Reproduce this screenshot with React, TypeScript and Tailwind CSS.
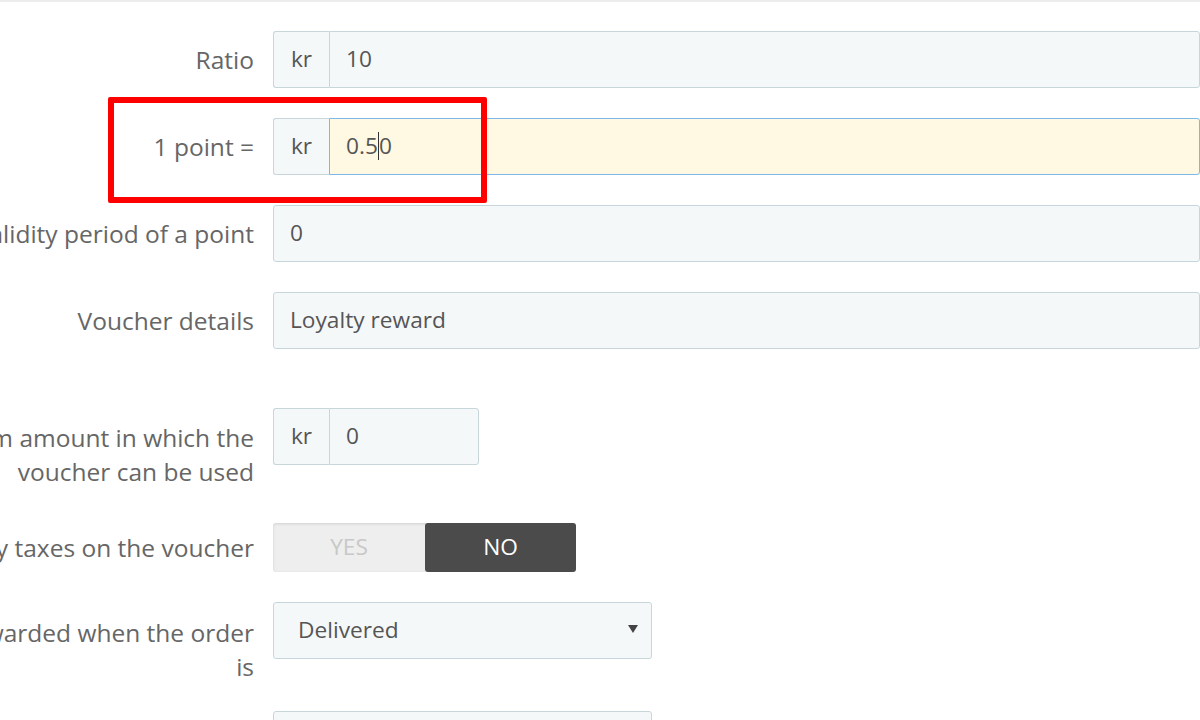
import React from "react";

const labelBase =
  "w-[254px] shrink-0 flex justify-end text-right text-[24.5px] leading-[34px] text-[#666666] whitespace-nowrap";

const fieldBase =
  "h-[57px] flex items-center border border-[#c7d6db] bg-[#f5f8f9] rounded-[3px] text-[22.7px] text-[#555555]";

function Label({ lines, className = "" }: { lines: string[]; className?: string }) {
  return (
    <div className={`${labelBase} ${className}`}>
      <div className="flex flex-col items-end">
        {lines.map((l) => (
          <span key={l}>{l}</span>
        ))}
      </div>
    </div>
  );
}

function AddonInput({
  value,
  width,
  focused = false,
}: {
  value: React.ReactNode;
  width: string;
  focused?: boolean;
}) {
  return (
    <div className={`${width} h-[57px] flex text-[22.7px] text-[#555555]`}>
      <div className="w-[56px] shrink-0 flex items-center justify-center border border-r-0 border-[#c7d6db] bg-[#f5f8f9] rounded-l-[3px]">
        kr
      </div>
      <div
        className={
          focused
            ? "flex-1 flex items-center pl-[16px] border border-[#7cb9e8] bg-[#fff9e3] rounded-r-[3px]"
            : "flex-1 flex items-center pl-[16px] border border-[#c7d6db] bg-[#f5f8f9] rounded-r-[3px]"
        }
      >
        {value}
      </div>
    </div>
  );
}

export default function App() {
  return (
    <div
      className="relative w-[1200px] h-[720px] overflow-hidden bg-white"
      style={{ fontFamily: '"Open Sans", "Noto Sans", sans-serif' }}
    >
      <div className="h-[2px] bg-[#ececec]" />

      <div className="flex flex-col">
        {/* Ratio */}
        <div className="mt-[29px] flex items-center gap-[19px]">
          <Label lines={["Ratio"]} />
          <AddonInput value="10" width="w-[1000px]" />
        </div>

        {/* 1 point = */}
        <div className="mt-[30px] flex items-center gap-[19px]">
          <Label lines={["1 point ="]} />
          <AddonInput
            width="w-[1000px]"
            focused
            value={
              <span className="flex items-center">
                0.5
                <span className="inline-block w-[1px] h-[28px] bg-[#333333]" />
                0
              </span>
            }
          />
        </div>

        {/* Validity */}
        <div className="mt-[30px] flex items-center gap-[19px]">
          <Label lines={["Validity period of a point"]} />
          <div className={`${fieldBase} w-[1000px] pl-[16px]`}>0</div>
        </div>

        {/* Voucher details */}
        <div className="mt-[30px] flex items-center gap-[19px]">
          <Label lines={["Voucher details"]} />
          <div className={`${fieldBase} w-[1000px] pl-[16px]`}>Loyalty reward</div>
        </div>

        {/* Minimum amount */}
        <div className="mt-[59px] flex items-start gap-[19px]">
          <Label
            lines={["Minimum amount in which the", "voucher can be used"]}
            className="pt-[13px]"
          />
          <AddonInput value="0" width="w-[206px]" />
        </div>

        {/* Apply taxes */}
        <div className="mt-[34px] flex items-center gap-[19px]">
          <Label lines={["Apply taxes on the voucher"]} />
          <div className="w-[303px] h-[49px] flex rounded-[3px] bg-[#eeeeee] shadow-[inset_0_1px_3px_rgba(0,0,0,0.12)] text-[22.7px] uppercase">
            <div className="w-[152px] flex items-center justify-center text-[#c8c8c8]">
              Yes
            </div>
            <div className="flex-1 flex items-center justify-center rounded-[3px] bg-[#4b4b4b] text-white">
              No
            </div>
          </div>
        </div>

        {/* Points awarded */}
        <div className="mt-[30px] flex items-start gap-[19px]">
          <Label
            lines={["Points are awarded when the order", "is"]}
            className="pt-[14px]"
          />
          <div className={`${fieldBase} relative w-[379px] pl-[24px]`}>
            Delivered
            <svg
              className="absolute right-[13px] top-[21px]"
              width="10"
              height="10"
              viewBox="0 0 10 10"
            >
              <path d="M0 1 L10 1 L5 9 Z" fill="#444444" />
            </svg>
          </div>
        </div>

        {/* next row, cut off */}
        <div className="mt-[27px] flex items-start gap-[19px]">
          <div className="w-[254px] shrink-0" />
          <div className={`${fieldBase} w-[379px]`} />
        </div>
      </div>

      {/* annotation box */}
      <div className="absolute left-[108px] top-[97px] w-[379px] h-[106px] border-[6px] border-[#ff0000] rounded-[2px]" />
    </div>
  );
}
